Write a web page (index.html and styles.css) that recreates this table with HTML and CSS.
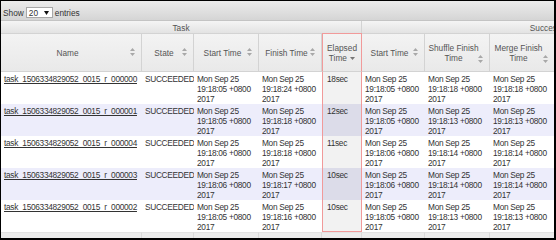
FILE: index.html
```html
<!DOCTYPE html>
<html>
<head>
<meta charset="utf-8">
<title>Tasks</title>
<link rel="stylesheet" href="styles.css">
</head>
<body>
<div class="frame">
  <div class="toolbar">
    <label class="length">Show
      <span class="select"><span>20</span><svg class="select-arrow" width="5" height="4" viewBox="0 0 5 4"><path d="M0 0H5L2.5 4Z"/></svg></span>
      entries</label>
  </div>
  <table class="tasks">
    <colgroup>
      <col class="w-name"><col class="w-state"><col class="w-start"><col class="w-finish"><col class="w-elapsed">
      <col class="w-astart"><col class="w-shuffle"><col class="w-merge"><col class="w-x1"><col class="w-x2"><col class="w-x3">
    </colgroup>
    <thead>
      <tr class="group-row">
        <th colspan="5">Task</th>
        <th colspan="6">Successful Attempt</th>
      </tr>
      <tr class="head-row">
        <th class="sortable">Name<svg class="sort" width="5" height="8" viewBox="0 0 5 8"><path d="M2.5 0L5 3H0Z M0 5H5L2.5 8Z"/></svg></th>
        <th class="sortable">State<svg class="sort" width="5" height="8" viewBox="0 0 5 8"><path d="M2.5 0L5 3H0Z M0 5H5L2.5 8Z"/></svg></th>
        <th class="sortable">Start Time<svg class="sort" width="5" height="8" viewBox="0 0 5 8"><path d="M2.5 0L5 3H0Z M0 5H5L2.5 8Z"/></svg></th>
        <th class="sortable">Finish Time<svg class="sort" width="5" height="8" viewBox="0 0 5 8"><path d="M2.5 0L5 3H0Z M0 5H5L2.5 8Z"/></svg></th>
        <th class="el el-head">Elapsed<br>Time <svg class="desc" width="5" height="3" viewBox="0 0 5 3"><path d="M0 0H5L2.5 3Z"/></svg></th>
        <th class="sortable">Start Time<svg class="sort" width="5" height="8" viewBox="0 0 5 8"><path d="M2.5 0L5 3H0Z M0 5H5L2.5 8Z"/></svg></th>
        <th class="sortable">Shuffle Finish<br>Time<svg class="sort low" width="5" height="8" viewBox="0 0 5 8"><path d="M2.5 0L5 3H0Z M0 5H5L2.5 8Z"/></svg></th>
        <th class="sortable">Merge Finish<br>Time<svg class="sort low" width="5" height="8" viewBox="0 0 5 8"><path d="M2.5 0L5 3H0Z M0 5H5L2.5 8Z"/></svg></th>
        <th class="sortable">Finish Time<svg class="sort" width="5" height="8" viewBox="0 0 5 8"><path d="M2.5 0L5 3H0Z M0 5H5L2.5 8Z"/></svg></th>
        <th class="sortable">Elapsed Time<br>Shuffle<svg class="sort low" width="5" height="8" viewBox="0 0 5 8"><path d="M2.5 0L5 3H0Z M0 5H5L2.5 8Z"/></svg></th>
        <th class="sortable">Elapsed Time<br>Merge<svg class="sort low" width="5" height="8" viewBox="0 0 5 8"><path d="M2.5 0L5 3H0Z M0 5H5L2.5 8Z"/></svg></th>
      </tr>
    </thead>
    <tbody>
      <tr>
        <td><a href="#">task_1506334829052_0015_r_000000</a></td>
        <td class="state">SUCCEEDED</td>
        <td>Mon Sep 25<br>19:18:05 +0800<br>2017</td>
        <td>Mon Sep 25<br>19:18:24 +0800<br>2017</td>
        <td class="el sorted">18sec</td>
        <td>Mon Sep 25<br>19:18:05 +0800<br>2017</td>
        <td>Mon Sep 25<br>19:18:18 +0800<br>2017</td>
        <td>Mon Sep 25<br>19:18:18 +0800<br>2017</td>
        <td>Mon Sep 25<br>19:18:24 +0800<br>2017</td>
        <td>13sec</td>
        <td>0sec</td>
      </tr>
      <tr>
        <td><a href="#">task_1506334829052_0015_r_000001</a></td>
        <td class="state">SUCCEEDED</td>
        <td>Mon Sep 25<br>19:18:05 +0800<br>2017</td>
        <td>Mon Sep 25<br>19:18:18 +0800<br>2017</td>
        <td class="el sorted">12sec</td>
        <td>Mon Sep 25<br>19:18:05 +0800<br>2017</td>
        <td>Mon Sep 25<br>19:18:13 +0800<br>2017</td>
        <td>Mon Sep 25<br>19:18:13 +0800<br>2017</td>
        <td>Mon Sep 25<br>19:18:18 +0800<br>2017</td>
        <td>8sec</td>
        <td>0sec</td>
      </tr>
      <tr>
        <td><a href="#">task_1506334829052_0015_r_000004</a></td>
        <td class="state">SUCCEEDED</td>
        <td>Mon Sep 25<br>19:18:06 +0800<br>2017</td>
        <td>Mon Sep 25<br>19:18:18 +0800<br>2017</td>
        <td class="el sorted">11sec</td>
        <td>Mon Sep 25<br>19:18:06 +0800<br>2017</td>
        <td>Mon Sep 25<br>19:18:14 +0800<br>2017</td>
        <td>Mon Sep 25<br>19:18:14 +0800<br>2017</td>
        <td>Mon Sep 25<br>19:18:18 +0800<br>2017</td>
        <td>8sec</td>
        <td>0sec</td>
      </tr>
      <tr>
        <td><a href="#">task_1506334829052_0015_r_000003</a></td>
        <td class="state">SUCCEEDED</td>
        <td>Mon Sep 25<br>19:18:06 +0800<br>2017</td>
        <td>Mon Sep 25<br>19:18:17 +0800<br>2017</td>
        <td class="el sorted">10sec</td>
        <td>Mon Sep 25<br>19:18:06 +0800<br>2017</td>
        <td>Mon Sep 25<br>19:18:14 +0800<br>2017</td>
        <td>Mon Sep 25<br>19:18:14 +0800<br>2017</td>
        <td>Mon Sep 25<br>19:18:17 +0800<br>2017</td>
        <td>8sec</td>
        <td>0sec</td>
      </tr>
      <tr class="last">
        <td><a href="#">task_1506334829052_0015_r_000002</a></td>
        <td class="state">SUCCEEDED</td>
        <td>Mon Sep 25<br>19:18:05 +0800<br>2017</td>
        <td>Mon Sep 25<br>19:18:16 +0800<br>2017</td>
        <td class="el sorted">10sec</td>
        <td>Mon Sep 25<br>19:18:05 +0800<br>2017</td>
        <td>Mon Sep 25<br>19:18:13 +0800<br>2017</td>
        <td>Mon Sep 25<br>19:18:13 +0800<br>2017</td>
        <td>Mon Sep 25<br>19:18:16 +0800<br>2017</td>
        <td>8sec</td>
        <td>0sec</td>
      </tr>
    </tbody>
    <tfoot>
      <tr>
        <th></th><th></th><th></th><th></th><th></th><th></th><th></th><th></th><th></th><th></th><th></th>
      </tr>
    </tfoot>
  </table>
</div>
</body>
</html>
```

FILE: styles.css
```css
* { box-sizing: border-box; }

body {
  margin: 0;
  background: #fff;
  font-family: "Liberation Sans", Arial, sans-serif;
  font-size: 8.3px;
  color: #333;
}

.frame {
  width: 556px;
  height: 240px;
  border: 1px solid #000;
  border-right-width: 2px;
  border-bottom-width: 2px;
  overflow: hidden;
  background: #fff;
}

.toolbar {
  height: 20px;
  padding: 4px 0 0 2px;
  border-bottom: 1px solid #c4c4c4;
  background: linear-gradient(#ececec, #d5d5d5);
  display: flex;
  align-items: center;
  line-height: 10px;
}

.length {
  display: flex;
  align-items: center;
  gap: 2px;
}

.select {
  display: inline-flex;
  align-items: center;
  justify-content: space-between;
  width: 27px;
  height: 11px;
  padding: 0 3px 0 2px;
  background: #fff;
  border: 1px solid #a8a8a8;
  color: #333;
}

.select-arrow { fill: #111; }

.tasks {
  table-layout: fixed;
  width: 768px;
  border-collapse: separate;
  border-spacing: 0;
}

.w-name { width: 141px; }
.w-state { width: 52px; }
.w-start { width: 65px; }
.w-finish { width: 63px; }
.w-elapsed { width: 40px; }
.w-astart { width: 63px; }
.w-shuffle { width: 65px; }
.w-merge { width: 65px; }
.w-x1 { width: 72px; }
.w-x2 { width: 71px; }
.w-x3 { width: 71px; }

th {
  font-weight: normal;
  color: #555;
  text-align: center;
  line-height: 10px;
}

.group-row th {
  height: 12px;
  padding: 1px 0 0;
  vertical-align: middle;
  border-right: 1px solid #d3d3d3;
  background: linear-gradient(#f5f5f5, #e3e3e3);
  white-space: nowrap;
}

.head-row th {
  position: relative;
  height: 39px;
  padding: 0 10px 0 3px;
  vertical-align: middle;
  border-top: 1px solid #d3d3d3;
  border-right: 1px solid #d3d3d3;
  border-bottom: 1px solid #d3d3d3;
  background: linear-gradient(#f3f3f3, #e9e9e9);
  white-space: nowrap;
}

.head-row th.el-head {
  padding: 0 2px;
  border-top-color: #f19a9a;
  border-left: 1px solid #f19a9a;
  border-right-color: #f19a9a;
}

.sort {
  position: absolute;
  right: 6px;
  top: 50%;
  margin-top: -5px;
  fill: #a8a8a8;
}

.sort.low { margin-top: 2px; }

.desc {
  fill: #777;
  vertical-align: middle;
  margin-left: 1px;
}

td {
  height: 32px;
  padding: 2px 2px 0 3px;
  line-height: 10px;
  letter-spacing: -0.3px;
  vertical-align: top;
  white-space: nowrap;
  overflow: hidden;
}

td.state { padding: 2px 0 0 3px; }

td a {
  color: #333;
  text-decoration: underline;
}

tbody tr:nth-child(even) td { background: #ededfb; }

td.sorted { background: #f2f2f2; padding-left: 4px; }
tbody tr:nth-child(even) td.sorted { background: #dcdce9; }

td.el {
  border-left: 1px solid #f19a9a;
  border-right: 1px solid #f19a9a;
}

tr.last td.el { border-bottom: 1px solid #f19a9a; }

tfoot th {
  height: 12px;
  padding: 0;
  border-right: 1px solid #dadada;
  border-top: 1px solid #e2e2e2;
  background: #ececec;
}
```
